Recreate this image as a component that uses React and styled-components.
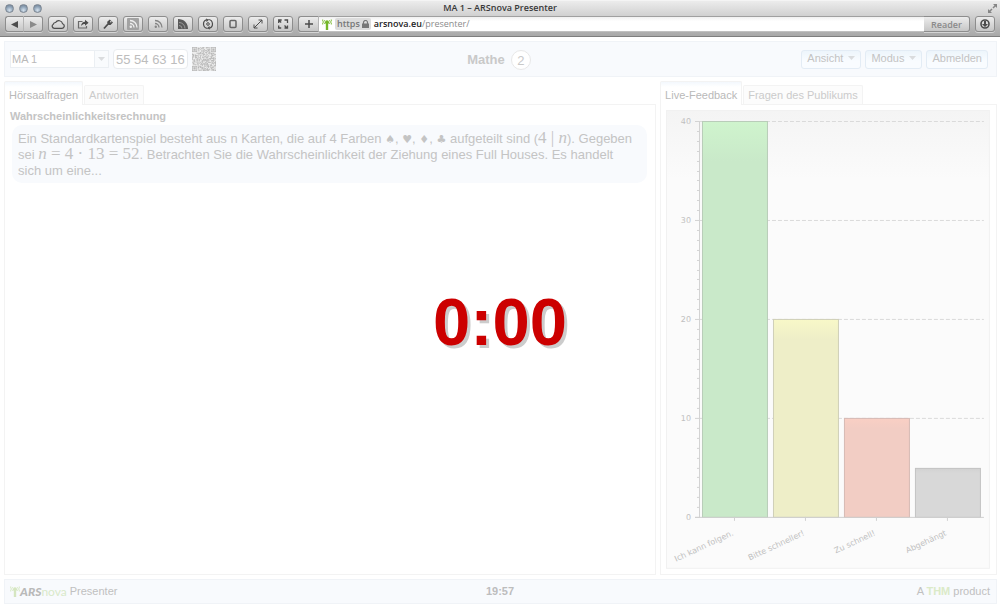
import React from "react";
import styled, { createGlobalStyle, css } from "styled-components";

const Global = createGlobalStyle`
  * { box-sizing: border-box; }
  body {
    margin: 0;
    background: #fff;
    color: #c4c4c4;
    font-family: "Liberation Sans", Arial, sans-serif;
    font-size: 11px;
  }
  button, input, select { font: inherit; color: inherit; margin: 0; }
`;

const Window = styled.div`
  display: flex;
  flex-direction: column;
  min-height: 100vh;
`;

/* ---------- browser chrome ---------- */

const Chrome = styled.header`
  display: flex;
  flex-direction: column;
  gap: 1px;
  height: 37px;
  padding: 0 5px;
  background: linear-gradient(#ececec, #d2d2d2 40%, #b0b0b0 85%, #a8a8a8);
  border-top: 1px solid #f4f4f4;
  border-bottom: 1px solid #7e7e7e;
  font-family: "Open Sans", sans-serif;
`;

const TitleBar = styled.div`
  display: grid;
  grid-template-columns: 1fr auto 1fr;
  align-items: center;
  height: 14px;
  color: #383838;
  font-size: 9px;
  font-weight: 600;
  line-height: 14px;
`;

const Lights = styled.div`
  display: flex;
  gap: 5px;
`;

const Light = styled.button`
  width: 9px;
  height: 9px;
  padding: 0;
  border: 1px solid #7c8692;
  border-radius: 50%;
  background: radial-gradient(circle at 50% 75%, #d5e2ee, #8fa3b7 55%, #6b7c90);
`;

const Expand = styled.button`
  display: flex;
  justify-self: end;
  padding: 0;
  margin-right: -3px;
  border: 0;
  background: none;
  color: #858585;
`;

const Toolbar = styled.div`
  display: flex;
  gap: 5px;
  height: 16px;
`;

const Group = styled.div`
  display: flex;
  flex: ${(p) => (p.$grow ? 1 : "none")};
`;

const ToolButton = styled.button`
  display: flex;
  flex: none;
  align-items: center;
  justify-content: center;
  width: ${(p) => p.$width || 20}px;
  height: 16px;
  padding: 0;
  border: 1px solid #8d8d8d;
  border-radius: 3px;
  background: linear-gradient(#ececec, #c6c6c6);
  box-shadow: 0 1px 0 #d4d4d4;
  color: ${(p) => (p.$dim ? "#8a8a8a" : "#4c4c4c")};
  font-size: 9px;
  font-weight: 600;
  ${(p) => p.$join === "left" && css`border-radius: 3px 0 0 3px; border-right-color: #b5b5b5;`}
  ${(p) => p.$join === "right" && css`border-radius: 0 3px 3px 0; border-left: 0;`}
`;

const Address = styled.div`
  display: flex;
  flex: 1;
  align-items: center;
  gap: 3px;
  min-width: 0;
  height: 16px;
  padding-left: 3px;
  border-top: 1px solid #a0a0a0;
  border-bottom: 1px solid #c0c0c0;
  background: linear-gradient(#f0f0f0, #fff 30%);
  font-size: 9px;
  line-height: 12px;
`;

const Secure = styled.span`
  display: flex;
  align-items: center;
  gap: 2px;
  padding: 0 2px;
  border-radius: 2px;
  background: #dcdcdc;
  color: #777;
  font-weight: 600;
`;

const Url = styled.label`
  color: #8b8b8b;
  b { color: #1c1c1c; font-weight: 600; }
`;

const UrlInput = styled.input`
  flex: 1;
  min-width: 0;
  height: 12px;
  padding: 0;
  border: 0;
  outline: 0;
  background: none;
`;

/* ---------- presenter ---------- */

const Page = styled.div`
  display: flex;
  flex: 1;
  flex-direction: column;
  gap: 4px;
  padding: 4px 3px 4px 4px;
`;

const Bar = styled.div`
  display: grid;
  grid-template-columns: 1fr auto 1fr;
  align-items: center;
  height: ${(p) => p.$height}px;
  padding: 0 ${(p) => (p.$height > 30 ? 8 : 6)}px 0 5px;
  border: 1px solid #f0f3f7;
  background: #f8fafd;
`;

const Session = styled.div`
  display: flex;
  align-items: center;
  gap: 4px;
`;

const SelectWrap = styled.div`
  display: grid;
  grid-template-columns: 1fr 14px;
  width: 99px;
  height: 18px;
  border: 1px solid #ebeff3;
  background: #fff;
`;

const SessionSelect = styled.select`
  grid-area: 1 / 1 / 2 / 3;
  padding: 0 1px;
  border: 0;
  appearance: none;
  background: none;
  color: #b9b9b9;
`;

const SelectArrow = styled.span`
  grid-area: 1 / 2 / 2 / 3;
  display: flex;
  align-items: center;
  justify-content: center;
  border-left: 1px solid #ebeff3;
  background: #f9fbfd;
  pointer-events: none;
`;

const Code = styled.div`
  height: 20px;
  padding: 0 2px;
  border: 1px solid #e9ecef;
  border-radius: 4px;
  background: #fff;
  color: #bdbdbd;
  font-size: 13px;
  line-height: 20px;
`;

const Course = styled.h1`
  display: flex;
  align-items: center;
  gap: 6px;
  margin: 0;
  color: #c9c9c9;
  font-size: 13px;
`;

const Count = styled.span`
  width: 20px;
  height: 20px;
  margin-top: 2px;
  border: 1px solid #e8e8e8;
  border-radius: 50%;
  background: #fff;
  font-weight: normal;
  line-height: 20px;
  text-align: center;
`;

const Actions = styled.div`
  display: flex;
  justify-content: flex-end;
  gap: 4px;
`;

const Action = styled.button`
  display: flex;
  align-items: center;
  gap: 5px;
  height: 19px;
  padding: 0 5px 2px;
  border: 1px solid #e3ecf5;
  border-radius: 3px;
  background: linear-gradient(#edf5fb, #f9fcff 60%);
  color: #c3c3c3;
  line-height: 16px;
`;

const Columns = styled.main`
  display: grid;
  flex: 1;
  grid-template-columns: minmax(0, 60fr) minmax(0, 31fr);
  gap: 4px;
`;

const Column = styled.section`
  display: flex;
  flex-direction: column;
`;

const Tabs = styled.div`
  display: flex;
  align-items: flex-start;
  gap: 1px;
  height: 23px;
`;

const Tab = styled.button`
  position: relative;
  height: ${(p) => (p.$active ? 24 : 19)}px;
  margin-top: ${(p) => (p.$active ? 0 : 4)}px;
  padding: ${(p) => (p.$active ? "4px 4px 1px" : "0 4px")};
  border: 1px solid #f3f3f3;
  border-bottom: 0;
  border-radius: 2px 2px 0 0;
  background: ${(p) => (p.$active ? "linear-gradient(#f3f8fd, #fff 5px)" : "#fcfcfc")};
  color: ${(p) => (p.$active ? "#b9b9b9" : "#cbcbcb")};
  line-height: 18px;
`;

const Panel = styled.div`
  flex: 1;
  padding: 5px 6px 5px 5px;
  border: 1px solid #f3f3f3;
`;

const Subject = styled.h2`
  margin: 0;
  color: #c4c4c4;
  font-size: 11px;
  line-height: 12px;
`;

const Question = styled.p`
  margin: 3px 2px 0;
  padding: 6px 11px 4px 6px;
  border-radius: 10px;
  background: #f8fafd;
  font-size: 13px;
  line-height: 16px;
`;

const Formula = styled.span`
  font-family: "Liberation Serif", serif;
  font-size: 17px;
  line-height: 0;
  white-space: nowrap;
`;

const Suit = styled.span`
  font-family: "DejaVu Sans", sans-serif;
  font-size: 11px;
  line-height: 0;
`;

const ChartSvg = styled.svg`
  display: block;
  width: 100%;
  height: auto;
  font-family: "DejaVu Sans", sans-serif;
  font-size: 8px;
  fill: #c0c0c0;
`;

const Brand = styled.div`
  display: flex;
  align-items: center;
  gap: 3px;
  color: #c0c0c0;
`;

const Logo = styled.span`
  display: flex;
  align-items: center;
  color: #b9b9b9;
  font-family: Lato, sans-serif;
  font-size: 12px;
  i { font-weight: 900; }
  span { color: #d8e9ca; }
`;

const Clock = styled.time`
  color: #bdbdbd;
  font-weight: bold;
`;

const Credit = styled.div`
  justify-self: end;
  color: #c0c0c0;
  a { color: #dbeac8; font-weight: bold; text-decoration: none; }
`;

const Countdown = styled.div`
  position: fixed;
  inset: 35px 0 0;
  display: flex;
  align-items: center;
  justify-content: center;
  color: #c00;
  font-size: 67px;
  font-weight: bold;
  line-height: 1;
  text-shadow: 3px 3px 0 #ccc;
  pointer-events: none;
`;

/* ---------- drawings ---------- */

const Icon = ({ children, w = 14, h = 12 }) => (
  <svg width={w} height={h} viewBox={`0 0 ${w} ${h}`} fill="none" stroke="currentColor" strokeWidth="1.2" aria-hidden="true">
    {children}
  </svg>
);

const Caret = () => (
  <svg width="7" height="4" viewBox="0 0 7 4" fill="#dadcde" aria-hidden="true"><path d="M0 0h7L3.500 4z" /></svg>
);

const tools = [
  ["iCloud", <path d="M3.500 10.300h7.500a2.300 2.300 0 0 0 .6-4.500A3.800 3.800 0 0 0 4.600 4.500 2.400 2.400 0 0 0 2.300 6.200 2.200 2.200 0 0 0 3.500 10.300z" />],
  ["Teilen", <><path d="M6.500 3.500H2.500v6.500h8V8" stroke="#6a6a6a" /><path d="M5 8C5.300 5 7 3.800 9 3.700V1.800l3.600 3L9 7.700V5.900C7.500 5.900 6 6.500 5 8z" fill="currentColor" stroke="none" /></>],
  ["Passwort", <><path d="M3 10.500 7.500 5.500" strokeWidth="1.800" /><path d="M6 4 8.700 1.500l3.300 3L9.500 7 7.500 7z" fill="currentColor" stroke="none" /><circle cx="9.800" cy="3.700" r=".8" fill="#ddd" stroke="none" /></>],
  ["RSS lesen", <><rect x="1" y="0" width="12" height="12" rx="1" fill="#a2a2a2" stroke="none" /><g stroke="#eee" strokeWidth="1.300"><path d="M4 2.500a7 7 0 0 1 7 7M4 5.500a4 4 0 0 1 4 4" /></g><circle cx="4.800" cy="8.800" r="1.200" fill="#eee" stroke="none" /></>],
  ["RSS", <g stroke="#858585" strokeWidth="1.300"><path d="M4 2.500a7 7 0 0 1 7 7M4 5.500a4 4 0 0 1 4 4" /><circle cx="4.800" cy="8.800" r="1.200" fill="#858585" stroke="none" /></g>],
  ["Feeds", <><path d="M2 1c6 0 10 4 10 10H2z" fill="#5a5a5a" stroke="none" /><path d="M3 4.500A6 6 0 0 1 9 10.500M3 7.500a3 3 0 0 1 3 3" stroke="#aaa" strokeWidth=".8" /></>],
  ["Neu laden", <><path d="M5.500 1.800A4.500 4.500 0 0 0 6.500 10.500M8.500 10.200A4.500 4.500 0 0 0 7.500 1.500" /><path d="m5 .5 3 1.200L5.500 4zM9 11.500l-3-1.200L8.500 8z" fill="currentColor" stroke="none" /><circle cx="7" cy="6" r="1.300" strokeWidth="1" /></>],
  ["Gerät", <rect x="4" y="2.500" width="6" height="7" rx="1" strokeWidth="1.500" stroke="#666" />],
  ["Vergrößern", <path d="m3 10 8-8M7.500 2H11v3.500M3 6.500V10h3.500" strokeWidth="1" />],
  ["Vollbild", <path d="M2.700 5V2h3M2.700 2l2.500 2.500M8.500 2h3v3M2.700 7.500V10h2.500M8.500 10h3V7.500M11 10 8.500 7.500" strokeWidth="1.300" />],
];

const Antenna = ({ color }) => (
  <svg width="10" height="11" viewBox="0 0 10 11" fill="none" stroke={color} aria-hidden="true">
    <path d="M5 3v8" strokeWidth="2.400" />
    <circle cx="5" cy="3.200" r="2" fill={color} stroke="none" />
    <path d="M2.500 1a3 3 0 0 0 0 4M7.500 1a3 3 0 0 1 0 4M.7.500a4 4 0 0 0 0 5M9.300.500a4 4 0 0 1 0 5" strokeWidth=".9" />
  </svg>
);

const QR_SIZE = 33;
const qrPath = (() => {
  let seed = 20713;
  let d = "";
  const finder = (x, y) => {
    const ring = Math.max(Math.abs(x - 3), Math.abs(y - 3));
    return ring !== 2 && ring < 4;
  };
  for (let y = 0; y < QR_SIZE; y++) {
    for (let x = 0; x < QR_SIZE; x++) {
      seed = (seed * 1103515245 + 12345) % 2147483648;
      const fx = x > QR_SIZE - 9 ? QR_SIZE - 1 - x : x;
      const fy = y > QR_SIZE - 9 ? QR_SIZE - 1 - y : y;
      const corner = fx < 8 && fy < 8 && !(x > 20 && y > 20);
      if (corner ? finder(fx, fy) : (seed >> 16) % 2) d += `M${x} ${y}h1v1h-1z`;
    }
  }
  return d;
})();

const QrCode = () => (
  <svg width="24" height="24" viewBox={`0 0 ${QR_SIZE} ${QR_SIZE}`} role="img" aria-label="QR-Code">
    <rect width={QR_SIZE} height={QR_SIZE} fill="#ececec" />
    <path d={qrPath} fill="#b8b8b8" />
  </svg>
);

const bars = [
  { label: "Ich kann folgen.", value: 40, top: "#cff4cd", fill: "#c9e9c9", edge: "#b9cdb9" },
  { label: "Bitte schneller!", value: 20, top: "#f8f8c8", fill: "#eeeec8", edge: "#cfcfb8" },
  { label: "Zu schnell!", value: 10, top: "#f9cfc4", fill: "#f2cdc4", edge: "#d6bab4" },
  { label: "Abgehängt", value: 5, top: "#d2d2d2", fill: "#d8d8d8", edge: "#c2c2c2" },
];

const BASE = 407;
const UNIT = 9.9;
const yOf = (v) => Math.round(BASE - v * UNIT) + 0.5;

const FeedbackChart = () => (
  <ChartSvg viewBox="0 0 324 459" role="img" aria-label="Live-Feedback">
    <defs>
      <linearGradient id="plot" x1="0" y1="0" x2="0" y2="1">
        <stop offset="0" stopColor="#f4f4f4" />
        <stop offset=".15" stopColor="#fbfbfb" />
      </linearGradient>
      {bars.map((b, i) => (
        <linearGradient key={i} id={`bar${i}`} gradientUnits="userSpaceOnUse" x1="0" x2="0" y1={yOf(b.value)} y2={yOf(b.value) + b.value * UNIT * 0.1}>
          <stop offset="0" stopColor={b.top} />
          <stop offset="1" stopColor={b.fill} />
        </linearGradient>
      ))}
    </defs>
    <rect x=".5" y=".5" width="323" height="458" fill="url(#plot)" stroke="#f1f1f1" />
    {[10, 20, 30, 40].map((v) => (
      <line key={v} x1="34" x2="318" y1={yOf(v)} y2={yOf(v)} stroke="#dadada" strokeDasharray="4 2" />
    ))}
    <g stroke="#d3d3d3">
      <line x1="33.500" x2="33.500" y1="11" y2={BASE + 0.5} />
      {Array.from({ length: 41 }, (_, v) => (
        <line key={v} x1={v % 10 ? 31 : 29} x2="34" y1={yOf(v)} y2={yOf(v)} />
      ))}
    </g>
    {[0, 10, 20, 30, 40].map((v) => (
      <text key={v} x="25" y={yOf(v) + 3} textAnchor="end">{v}</text>
    ))}
    {bars.map((b, i) => (
      <g key={b.label}>
        <rect x={36.5 + i * 71} y={yOf(b.value)} width="65" height={yOf(0) - yOf(b.value)} fill={`url(#bar${i})`} stroke={b.edge} />
        <line x1={68.5 + i * 71} x2={68.5 + i * 71} y1={BASE} y2={BASE + 4} stroke="#d0d0d0" />
        <text transform={`translate(${68 + i * 71} ${BASE + 18}) rotate(-25)`} textAnchor="end">{b.label}</text>
      </g>
    ))}
    <line x1="29" x2="318" y1={yOf(0)} y2={yOf(0)} stroke="#cfcfcf" />
  </ChartSvg>
);

export default function App() {
  return (
    <Window>
      <Global />
      <Chrome>
        <TitleBar>
          <Lights>
            <Light aria-label="Schließen" />
            <Light aria-label="Minimieren" />
            <Light aria-label="Zoomen" />
          </Lights>
          <span>MA 1 – ARSnova Presenter</span>
          <Expand aria-label="Vollbild">
            <Icon w={11} h={11}>
              <path d="M6 1h4v4zM1 6v4h4z" fill="currentColor" stroke="none" />
              <path d="m6 5 3-3M2 9l3-3" strokeWidth="1.500" />
            </Icon>
          </Expand>
        </TitleBar>
        <Toolbar>
          <Group>
            <ToolButton $width={19} $join="left" aria-label="Zurück">
              <Icon w={7} h={7}><path d="M7 0v7L0 3.500z" fill="currentColor" stroke="none" /></Icon>
            </ToolButton>
            <ToolButton $width={19} $join="right" $dim aria-label="Vorwärts">
              <Icon w={7} h={7}><path d="M0 0v7l7-3.500z" fill="currentColor" stroke="none" /></Icon>
            </ToolButton>
          </Group>
          {tools.map(([name, drawing]) => (
            <ToolButton key={name} aria-label={name}><Icon>{drawing}</Icon></ToolButton>
          ))}
          <Group $grow>
            <ToolButton $width={21} $join="left" aria-label="Lesezeichen hinzufügen">
              <Icon w={8} h={8}><path d="M4 0v8M0 4h8" strokeWidth="1.500" /></Icon>
            </ToolButton>
            <Address>
              <Antenna color="#76b82a" />
              <Secure>
                https
                <Icon w={7} h={8}>
                  <rect x="0" y="3.500" width="7" height="4.500" fill="currentColor" stroke="none" />
                  <path d="M1.500 4V2.500a2 2 0 0 1 4 0V4" />
                </Icon>
              </Secure>
              <Url htmlFor="address"><b>arsnova.eu</b>/presenter/</Url>
              <UrlInput id="address" type="text" />
            </Address>
            <ToolButton $width={46} $join="right" $dim>Reader</ToolButton>
          </Group>
          <ToolButton aria-label="Downloads">
            <Icon w={10} h={10}>
              <circle cx="5" cy="5" r="4" strokeWidth="1.600" />
              <path d="M4 2h2v3h2L5 8 2 5h2z" fill="currentColor" stroke="none" />
            </Icon>
          </ToolButton>
        </Toolbar>
      </Chrome>

      <Page>
        <Bar $height={36}>
          <Session>
            <SelectWrap>
              <SessionSelect aria-label="Session" defaultValue="MA 1">
                <option>MA 1</option>
              </SessionSelect>
              <SelectArrow><Caret /></SelectArrow>
            </SelectWrap>
            <Code>55 54 63 16</Code>
            <QrCode />
          </Session>
          <Course>Mathe <Count>2</Count></Course>
          <Actions>
            <Action>Ansicht <Caret /></Action>
            <Action>Modus <Caret /></Action>
            <Action>Abmelden</Action>
          </Actions>
        </Bar>

        <Columns>
          <Column>
            <Tabs role="tablist">
              <Tab role="tab" aria-selected="true" $active>Hörsaalfragen</Tab>
              <Tab role="tab" aria-selected="false">Antworten</Tab>
            </Tabs>
            <Panel role="tabpanel">
              <Subject>Wahrscheinlichkeitsrechnung</Subject>
              <Question>
                Ein Standardkartenspiel besteht aus n Karten, die auf 4 Farben <Suit>♠</Suit>, <Suit>♥</Suit>, <Suit>♦</Suit>, <Suit>♣</Suit> aufgeteilt
                sind (<Formula>4 | <i>n</i></Formula>). Gegeben sei <Formula><i>n</i> = 4 · 13 = 52</Formula>. Betrachten Sie die
                Wahrscheinlichkeit der Ziehung eines Full Houses. Es handelt sich um eine...
              </Question>
            </Panel>
          </Column>
          <Column>
            <Tabs role="tablist">
              <Tab role="tab" aria-selected="true" $active>Live-Feedback</Tab>
              <Tab role="tab" aria-selected="false">Fragen des Publikums</Tab>
            </Tabs>
            <Panel role="tabpanel">
              <FeedbackChart />
            </Panel>
          </Column>
        </Columns>

        <Bar as="footer" $height={25}>
          <Brand>
            <Logo><Antenna color="#d5e6c0" /><i>ARS</i><span>nova</span></Logo>
            Presenter
          </Brand>
          <Clock>19:57</Clock>
          <Credit>A <a href="#thm">THM</a> product</Credit>
        </Bar>
      </Page>
      <Countdown role="timer">0:00</Countdown>
    </Window>
  );
}
